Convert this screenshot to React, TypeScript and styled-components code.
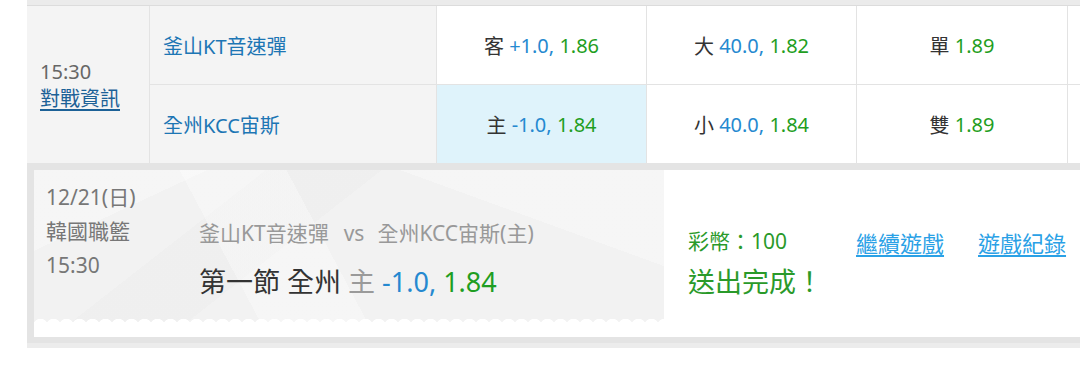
import React from "react";
import styled, { createGlobalStyle } from "styled-components";

const GlobalStyle = createGlobalStyle`
    html, body {
        margin: 0;
        padding: 0;
        background: #ffffff;
    }
    body {
        font-family: "Noto Sans", "Noto Sans CJK TC", sans-serif;
        color: #333;
    }
`;

const Page = styled.div`
    width: 1080px;
    height: 367px;
    overflow: hidden;
    background: #fff;
`;

const Board = styled.div`
    margin-left: 27px;
    width: 1080px;
`;

const TopBand = styled.div`
    height: 5px;
    background: #ebebeb;
    border-bottom: 1px solid #dcdcdc;
`;

const MatchGrid = styled.div`
    display: grid;
    grid-template-columns: 123px 287px 210px 210px 211px 1fr;
    grid-template-rows: 79px 78px;
    background: #fff;
`;

const Cell = styled.div<{ $bg?: string; $last?: boolean }>`
    box-sizing: border-box;
    border-right: 1px solid #e3e3e3;
    border-bottom: ${(p) => (p.$last ? "none" : "1px solid #e3e3e3")};
    background: ${(p) => p.$bg ?? "#fff"};
    display: flex;
    align-items: center;
    font-size: 20px;
`;

const TimeCell = styled(Cell)`
    grid-row: 1 / span 2;
    border-bottom: none;
    flex-direction: column;
    align-items: flex-start;
    justify-content: center;
    padding-left: 13px;
    line-height: 27px;
    color: #666;
`;

const InfoLink = styled.a`
    color: #1c6197;
    text-decoration: underline;
    text-underline-offset: 3px;
`;

const TeamCell = styled(Cell)`
    padding-left: 13px;
    color: #1d76b4;
`;

const OddsCell = styled(Cell)`
    justify-content: center;
    color: #333;
`;

const Blue = styled.span`
    color: #2589d0;
`;

const Green = styled.span`
    color: #1f9e22;
`;

const Grey = styled.span`
    color: #9a9a9a;
`;

const SlipWrap = styled.div`
    background: #e4e4e4;
    padding: 7px 0 6px 7px;
`;

const BottomBand = styled.div`
    height: 5px;
    background: #ececec;
`;

const SlipCard = styled.div`
    height: 167px;
    background: #fff;
    display: flex;
    align-items: flex-start;
`;

const Ticket = styled.div`
    position: relative;
    width: 630px;
    height: 155px;
    box-sizing: border-box;
    padding-left: 12px;
    display: flex;
    background:
        linear-gradient(62deg, transparent 0 32%, rgba(255, 255, 255, 0.3) 32% 47%, transparent 47%),
        linear-gradient(-38deg, transparent 0 58%, rgba(0, 0, 0, 0.012) 58% 72%, transparent 72%),
        linear-gradient(155deg, rgba(255, 255, 255, 0.3) 0 18%, transparent 18%),
        linear-gradient(20deg, transparent 0 75%, rgba(255, 255, 255, 0.3) 75%),
        #f2f2f2;

    &::after {
        content: "";
        position: absolute;
        left: 0;
        right: 0;
        bottom: 0;
        height: 8px;
        background: radial-gradient(circle at 50% 120%, #fff 0 7.5px, transparent 8px) repeat-x;
        background-size: 13px 8px;
    }
`;

const GameInfo = styled.div`
    width: 153px;
    padding-top: 10px;
    font-size: 21px;
    line-height: 34px;
    color: #777;
`;

const BetInfo = styled.div`
    padding-top: 46px;
`;

const Matchup = styled.div`
    display: flex;
    font-size: 21px;
    line-height: 34px;
    color: #999;
    white-space: nowrap;
`;

const Versus = styled.span`
    margin: 0 13px 0 15px;
`;

const BetLine = styled.div`
    margin-top: 15px;
    font-size: 27px;
    line-height: 34px;
    color: #333;
`;

const Status = styled.div`
    width: 168px;
    margin-left: 24px;
    padding-top: 54px;
    color: #2a9a2a;
`;

const Coins = styled.div`
    font-size: 21px;
    line-height: 34px;
`;

const Done = styled.div`
    margin-top: 7px;
    font-size: 27px;
    line-height: 34px;
`;

const Links = styled.div`
    display: flex;
    gap: 34px;
    padding-top: 56px;
`;

const ActionLink = styled.a`
    font-size: 22px;
    line-height: 34px;
    color: #2aa1e6;
    text-decoration: underline;
    text-underline-offset: 3px;
`;

interface OddsProps {
    label: string;
    line?: string;
    price: string;
    bg?: string;
    last?: boolean;
}

const Odds = ({ label, line, price, bg, last }: OddsProps) => (
    <OddsCell $bg={bg} $last={last}>
        {label}&nbsp;
        {line && <Blue>{line}&nbsp;</Blue>}
        <Green>{price}</Green>
    </OddsCell>
);

export default function App() {
    return (
        <Page>
            <GlobalStyle />
            <Board>
                <TopBand />
                <MatchGrid>
                    <TimeCell $bg="#f4f4f4">
                        <div>15:30</div>
                        <InfoLink>對戰資訊</InfoLink>
                    </TimeCell>
                    <TeamCell $bg="#f4f4f4">釜山KT音速彈</TeamCell>
                    <Odds label="客" line="+1.0," price="1.86" />
                    <Odds label="大" line="40.0," price="1.82" />
                    <Odds label="單" price="1.89" />
                    <Cell />
                    <TeamCell $bg="#f4f4f4" $last>
                        全州KCC宙斯
                    </TeamCell>
                    <Odds label="主" line="-1.0," price="1.84" bg="#dff3fb" last />
                    <Odds label="小" line="40.0," price="1.84" last />
                    <Odds label="雙" price="1.89" last />
                    <Cell $last />
                </MatchGrid>
                <SlipWrap>
                    <SlipCard>
                        <Ticket>
                            <GameInfo>
                                <div>12/21(日)</div>
                                <div>韓國職籃</div>
                                <div>15:30</div>
                            </GameInfo>
                            <BetInfo>
                                <Matchup>
                                    <span>釜山KT音速彈</span>
                                    <Versus>vs</Versus>
                                    <span>全州KCC宙斯(主)</span>
                                </Matchup>
                                <BetLine>
                                    第一節 全州 <Grey>主</Grey> <Blue>-1.0,</Blue>{" "}
                                    <Green>1.84</Green>
                                </BetLine>
                            </BetInfo>
                        </Ticket>
                        <Status>
                            <Coins>彩幣：100</Coins>
                            <Done>送出完成！</Done>
                        </Status>
                        <Links>
                            <ActionLink>繼續遊戲</ActionLink>
                            <ActionLink>遊戲紀錄</ActionLink>
                        </Links>
                    </SlipCard>
                </SlipWrap>
                <BottomBand />
            </Board>
        </Page>
    );
}
